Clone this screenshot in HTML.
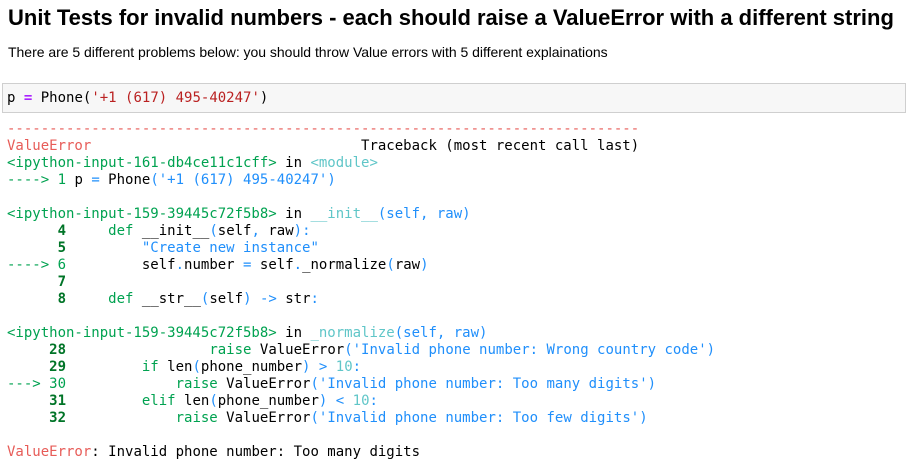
<!DOCTYPE html>
<html><head><style>
body{margin:0;background:#fff;width:906px;height:465px;overflow:hidden;}
h1{position:absolute;left:8px;top:5px;margin:0;font:bold 22px "Liberation Sans",sans-serif;color:#000;white-space:nowrap;}
p{position:absolute;left:8px;top:44px;margin:0;font:14px "Liberation Sans",sans-serif;color:#000;white-space:nowrap;letter-spacing:-0.02px;}
.inp{position:absolute;left:2px;top:83px;width:902px;height:28px;background:#f7f7f7;border:1px solid #cfcfcf;}
pre{margin:0;font:14px/17px "DejaVu Sans Mono",monospace;color:#000;white-space:pre;}
.inp pre{position:absolute;left:4px;top:6px;}
.out{position:absolute;left:7px;top:121px;}
.g{color:#00a250}.b{color:#208ffb}.c{color:#60c6c8}.r{color:#e75c58}.G{color:#007427;font-weight:bold}.m{color:#aa22ff;font-weight:bold}.s{color:#ba2121}
</style></head><body>
<h1>Unit Tests for invalid numbers - each should raise a ValueError with a different string</h1>
<p>There are 5 different problems below: you should throw Value errors with 5 different explainations</p>
<div class="inp"><pre>p <span class="m">=</span> Phone(<span class="s">'+1 (617) 495-40247'</span>)</pre></div>
<pre class="out"><span class="r">---------------------------------------------------------------------------</span>
<span class="r">ValueError</span>                                Traceback (most recent call last)
<span class="g">&lt;ipython-input-161-db4ce11c1cff&gt;</span> in <span class="c">&lt;module&gt;</span>
<span class="g">----&gt; 1</span> p <span class="b">=</span> Phone<span class="b">('+1 (617) 495-40247')</span>

<span class="g">&lt;ipython-input-159-39445c72f5b8&gt;</span> in <span class="c">__init__</span><span class="b">(self, raw)</span>
<span class="G">      4</span>     <span class="g">def</span> __init__<span class="b">(</span>self<span class="b">,</span> raw<span class="b">):</span>
<span class="G">      5</span>         <span class="b">"Create new instance"</span>
<span class="g">----&gt; 6</span>         self<span class="b">.</span>number <span class="b">=</span> self<span class="b">.</span>_normalize<span class="b">(</span>raw<span class="b">)</span>
<span class="G">      7</span> 
<span class="G">      8</span>     <span class="g">def</span> __str__<span class="b">(</span>self<span class="b">)</span> <span class="b">-&gt;</span> str<span class="b">:</span>

<span class="g">&lt;ipython-input-159-39445c72f5b8&gt;</span> in <span class="c">_normalize</span><span class="b">(self, raw)</span>
<span class="G">     28</span>                 <span class="g">raise</span> ValueError<span class="b">('Invalid phone number: Wrong country code')</span>
<span class="G">     29</span>         <span class="g">if</span> len<span class="b">(</span>phone_number<span class="b">)</span> <span class="b">&gt;</span> <span class="c">10</span><span class="b">:</span>
<span class="g">---&gt; 30</span>             <span class="g">raise</span> ValueError<span class="b">('Invalid phone number: Too many digits')</span>
<span class="G">     31</span>         <span class="g">elif</span> len<span class="b">(</span>phone_number<span class="b">)</span> <span class="b">&lt;</span> <span class="c">10</span><span class="b">:</span>
<span class="G">     32</span>             <span class="g">raise</span> ValueError<span class="b">('Invalid phone number: Too few digits')</span>

<span class="r">ValueError</span>: Invalid phone number: Too many digits</pre>
</body></html>
